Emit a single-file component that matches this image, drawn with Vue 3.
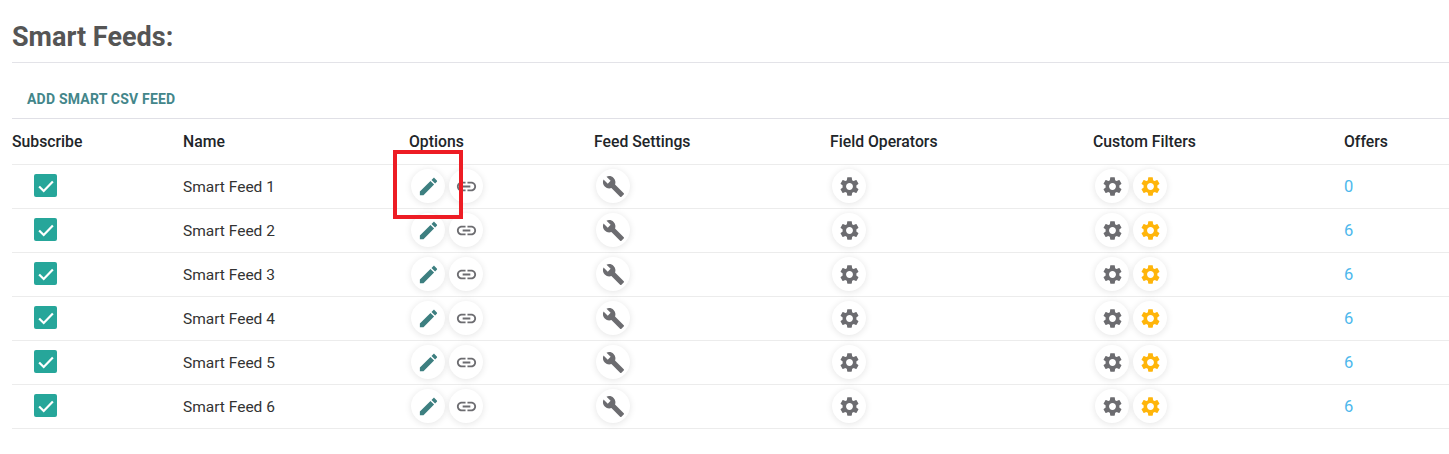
<script setup>
const feeds = [
  { name: 'Smart Feed 1', offers: 0 },
  { name: 'Smart Feed 2', offers: 6 },
  { name: 'Smart Feed 3', offers: 6 },
  { name: 'Smart Feed 4', offers: 6 },
  { name: 'Smart Feed 5', offers: 6 },
  { name: 'Smart Feed 6', offers: 6 },
]
const headers = ['Subscribe', 'Name', 'Options', 'Feed Settings', 'Field Operators', 'Custom Filters', 'Offers']
const edit = 'M3 17.25V21h3.75L17.81 9.94l-3.75-3.75L3 17.25zM20.71 7.04c.39-.39.39-1.02 0-1.41l-2.34-2.34c-.39-.39-1.02-.39-1.41 0l-1.83 1.83 3.75 3.75 1.83-1.83z'
const link = 'M3.9 12c0-1.71 1.39-3.1 3.1-3.1h4V7H7c-2.76 0-5 2.24-5 5s2.24 5 5 5h4v-1.9H7c-1.71 0-3.1-1.39-3.1-3.1zM8 13h8v-2H8v2zm9-6h-4v1.9h4c1.71 0 3.1 1.39 3.1 3.1s-1.39 3.1-3.1 3.1h-4V17h4c2.76 0 5-2.24 5-5s-2.24-5-5-5z'
const wrench = 'M22.7 19l-9.1-9.1c.9-2.3.4-5-1.5-6.9-2-2-5-2.4-7.4-1.3L9 6 6 9 1.6 4.7C.4 7.1.9 10.1 2.9 12.1c1.9 1.9 4.6 2.4 6.9 1.5l9.1 9.1c.4.4 1 .4 1.4 0l2.3-2.3c.5-.4.5-1.1.1-1.4z'
const gear = 'M19.14 12.94c.04-.3.06-.61.06-.94 0-.32-.02-.64-.07-.94l2.03-1.58c.18-.14.23-.41.12-.61l-1.92-3.32c-.12-.22-.37-.29-.59-.22l-2.39.96c-.5-.38-1.03-.7-1.62-.94l-.36-2.54c-.04-.24-.24-.41-.48-.41h-3.84c-.24 0-.43.17-.47.41l-.36 2.54c-.59.24-1.13.57-1.62.94l-2.39-.96c-.22-.08-.47 0-.59.22L2.74 8.87c-.12.21-.08.47.12.61l2.03 1.58c-.05.3-.09.63-.09.94s.02.64.07.94l-2.03 1.58c-.18.14-.23.41-.12.61l1.92 3.32c.12.22.37.29.59.22l2.39-.96c.5.38 1.03.7 1.62.94l.36 2.54c.05.24.24.41.48.41h3.84c.24 0 .44-.17.47-.41l.36-2.54c.59-.24 1.13-.56 1.62-.94l2.39.96c.22.08.47 0 .59-.22l1.92-3.32c.12-.22.07-.47-.12-.61l-2.01-1.58zM12 15.6c-1.98 0-3.6-1.62-3.6-3.6s1.62-3.6 3.6-3.6 3.6 1.62 3.6 3.6-1.62 3.6-3.6 3.6z'
</script>

<template>
  <div class="page">
    <h1 class="title">Smart Feeds:</h1>
    <div class="toolbar"><a class="add">Add Smart CSV Feed</a></div>
    <div class="table">
      <div class="row head">
        <div v-for="h in headers" :key="h" class="cell">{{ h }}</div>
      </div>
      <div v-for="f in feeds" :key="f.name" class="row">
        <div class="cell">
          <span class="check">
            <svg viewBox="0 0 24 24" width="22" height="22"><path d="M4.5 12.5l5 5 10-10.5" fill="none" stroke="#fff" stroke-width="2.4" /></svg>
          </span>
        </div>
        <div class="cell text">{{ f.name }}</div>
        <div class="cell">
          <span class="btn"><svg viewBox="0 0 24 24" class="teal"><path :d="edit" /></svg></span>
          <span class="btn"><svg viewBox="0 0 24 24" class="grey"><path :d="link" /></svg></span>
        </div>
        <div class="cell">
          <span class="btn"><svg viewBox="0 0 24 24" class="grey"><path :d="wrench" /></svg></span>
        </div>
        <div class="cell">
          <span class="btn"><svg viewBox="0 0 24 24" class="grey"><path :d="gear" /></svg></span>
        </div>
        <div class="cell">
          <span class="btn"><svg viewBox="0 0 24 24" class="grey"><path :d="gear" /></svg></span>
          <span class="btn"><svg viewBox="0 0 24 24" class="amber"><path :d="gear" /></svg></span>
        </div>
        <div class="cell"><a class="offers">{{ f.offers }}</a></div>
      </div>
    </div>
    <div class="highlight"></div>
  </div>
</template>

<style scoped>
.page {
  position: relative;
  height: 454px;
  box-sizing: border-box;
  padding-left: 12px;
  overflow: hidden;
  background: #fff;
  font-family: Roboto, "Liberation Sans", sans-serif;
  color: #212529;
}
.title {
  margin: 0;
  height: 63px;
  box-sizing: border-box;
  padding-top: 21px;
  font-size: 27px;
  line-height: 32px;
  font-weight: 700;
  color: #555;
  border-bottom: 1px solid #e3e3e8;
}
.toolbar {
  height: 56px;
  box-sizing: border-box;
  padding: 27px 0 0 15px;
  border-bottom: 1px solid #e0e0e6;
}
.add {
  display: block;
  font-size: 14px;
  line-height: 18px;
  font-weight: 700;
  letter-spacing: 0.2px;
  text-transform: uppercase;
  color: #43868a;
}
.table {
  width: 1437px;
}
.row {
  display: grid;
  grid-template-columns: 171px 226px 185px 236px 263px 251px 105px;
  height: 44px;
  box-sizing: border-box;
  padding-bottom: 1px;
  border-bottom: 1px solid #ececec;
  font-size: 15.5px;
  color: #333;
}
.row.head {
  height: 46px;
  padding-bottom: 0;
  font-size: 15.75px;
  font-weight: 500;
  color: #212529;
}
.cell {
  display: flex;
  align-items: center;
}
.text {
  padding-top: 2px;
}
.check {
  display: flex;
  align-items: center;
  justify-content: center;
  width: 23px;
  height: 23px;
  margin: 0 0 1px 22px;
  border-radius: 2px;
  background: #26a69a;
}
.btn {
  display: flex;
  align-items: center;
  justify-content: center;
  width: 34px;
  height: 34px;
  margin: 0 2px;
  border-radius: 50%;
  background: #fff;
  box-shadow: 0 1px 7px rgba(0, 0, 0, 0.11);
}
.btn svg {
  width: 23px;
  height: 23px;
}
.teal { fill: #3d7f80; }
.grey { fill: #6c6c70; }
.amber { fill: #ffb50a; }
.offers {
  color: #4db8ec;
  font-size: 16.5px;
}
.highlight {
  position: absolute;
  left: 393px;
  top: 150px;
  width: 70px;
  height: 69px;
  box-sizing: border-box;
  border: 4px solid #ed1c24;
}
</style>
